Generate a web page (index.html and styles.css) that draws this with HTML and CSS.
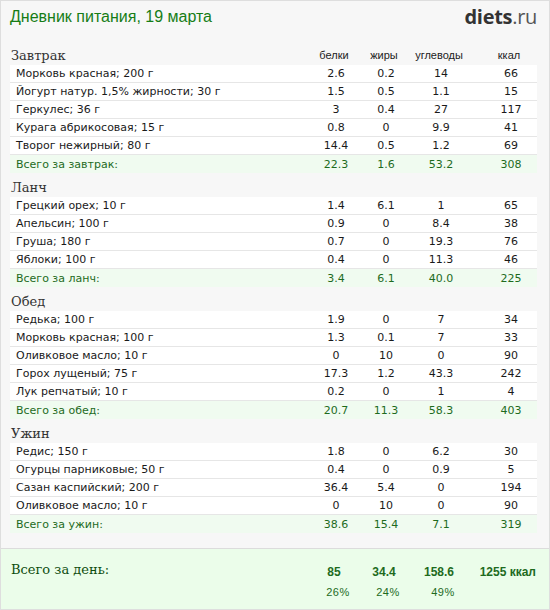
FILE: index.html
```html
<!DOCTYPE html>
<html lang="ru">
<head>
<meta charset="utf-8">
<title>Дневник питания</title>
<link rel="stylesheet" href="styles.css">
</head>
<body>
<div class="page">
  <header class="top">
    <h1 class="title">Дневник питания, 19 марта</h1>
    <div class="logo"><span class="logo-main">diets</span>.ru</div>
  </header>

  <section class="meal">
    <div class="meal-head">
      <h2 class="meal-name">Завтрак</h2>
      <span class="col-h">белки</span><span class="col-h">жиры</span><span class="col-h">углеводы</span><span class="col-h kc">ккал</span>
    </div>
    <div class="row"><span class="name">Морковь красная; 200 г</span><span>2.6</span><span>0.2</span><span>14</span><span class="kc">66</span></div>
    <div class="row"><span class="name">Йогурт натур. 1,5% жирности; 30 г</span><span>1.5</span><span>0.5</span><span>1.1</span><span class="kc">15</span></div>
    <div class="row"><span class="name">Геркулес; 36 г</span><span>3</span><span>0.4</span><span>27</span><span class="kc">117</span></div>
    <div class="row"><span class="name">Курага абрикосовая; 15 г</span><span>0.8</span><span>0</span><span>9.9</span><span class="kc">41</span></div>
    <div class="row"><span class="name">Творог нежирный; 80 г</span><span>14.4</span><span>0.5</span><span>1.2</span><span class="kc">69</span></div>
    <div class="row total"><span class="name">Всего за завтрак:</span><span>22.3</span><span>1.6</span><span>53.2</span><span class="kc">308</span></div>
  </section>

  <section class="meal">
    <div class="meal-head"><h2 class="meal-name">Ланч</h2></div>
    <div class="row"><span class="name">Грецкий орех; 10 г</span><span>1.4</span><span>6.1</span><span>1</span><span class="kc">65</span></div>
    <div class="row"><span class="name">Апельсин; 100 г</span><span>0.9</span><span>0</span><span>8.4</span><span class="kc">38</span></div>
    <div class="row"><span class="name">Груша; 180 г</span><span>0.7</span><span>0</span><span>19.3</span><span class="kc">76</span></div>
    <div class="row"><span class="name">Яблоки; 100 г</span><span>0.4</span><span>0</span><span>11.3</span><span class="kc">46</span></div>
    <div class="row total"><span class="name">Всего за ланч:</span><span>3.4</span><span>6.1</span><span>40.0</span><span class="kc">225</span></div>
  </section>

  <section class="meal">
    <div class="meal-head"><h2 class="meal-name">Обед</h2></div>
    <div class="row"><span class="name">Редька; 100 г</span><span>1.9</span><span>0</span><span>7</span><span class="kc">34</span></div>
    <div class="row"><span class="name">Морковь красная; 100 г</span><span>1.3</span><span>0.1</span><span>7</span><span class="kc">33</span></div>
    <div class="row"><span class="name">Оливковое масло; 10 г</span><span>0</span><span>10</span><span>0</span><span class="kc">90</span></div>
    <div class="row"><span class="name">Горох лущеный; 75 г</span><span>17.3</span><span>1.2</span><span>43.3</span><span class="kc">242</span></div>
    <div class="row"><span class="name">Лук репчатый; 10 г</span><span>0.2</span><span>0</span><span>1</span><span class="kc">4</span></div>
    <div class="row total"><span class="name">Всего за обед:</span><span>20.7</span><span>11.3</span><span>58.3</span><span class="kc">403</span></div>
  </section>

  <section class="meal">
    <div class="meal-head"><h2 class="meal-name">Ужин</h2></div>
    <div class="row"><span class="name">Редис; 150 г</span><span>1.8</span><span>0</span><span>6.2</span><span class="kc">30</span></div>
    <div class="row"><span class="name">Огурцы парниковые; 50 г</span><span>0.4</span><span>0</span><span>0.9</span><span class="kc">5</span></div>
    <div class="row"><span class="name">Сазан каспийский; 200 г</span><span>36.4</span><span>5.4</span><span>0</span><span class="kc">194</span></div>
    <div class="row"><span class="name">Оливковое масло; 10 г</span><span>0</span><span>10</span><span>0</span><span class="kc">90</span></div>
    <div class="row total"><span class="name">Всего за ужин:</span><span>38.6</span><span>15.4</span><span>7.1</span><span class="kc">319</span></div>
  </section>

  <footer class="day">
    <div class="day-grid">
      <div class="day-title">Всего за день:</div>
      <div class="day-cell"><b>85</b><span class="pct">26%</span></div>
      <div class="day-cell"><b>34.4</b><span class="pct">24%</span></div>
      <div class="day-cell"><b>158.6</b><span class="pct">49%</span></div>
      <div class="day-cell kcal"><b>1255 ккал</b></div>
    </div>
  </footer>
</div>
</body>
</html>
```

FILE: styles.css
```css
html, body {
  margin: 0;
  padding: 0;
}

body {
  background: #ffffff;
}

.page {
  box-sizing: border-box;
  width: 550px;
  height: 610px;
  border: 1px solid #dedede;
  background: #f7f7f7;
  display: flex;
  flex-direction: column;
}

.top {
  height: 44px;
  display: flex;
  align-items: flex-start;
  justify-content: space-between;
  padding: 0 12px 0 9px;
}

.title {
  margin: 6px 0 0 0;
  font-family: "Liberation Sans", Arial, sans-serif;
  font-weight: normal;
  font-size: 16px;
  line-height: 20px;
  color: #167d16;
}

.logo {
  margin-top: 3px;
  font-family: "Open Sans", "DejaVu Sans", sans-serif;
  font-size: 20px;
  line-height: 26px;
  color: #555555;
  letter-spacing: -0.3px;
}

.logo-main {
  font-weight: bold;
  color: #333333;
}

.meal {
  padding: 0 12px 0 9px;
  margin-bottom: 4px;
}

.meal-head,
.row,
.day-grid {
  display: grid;
  grid-template-columns: 1fr 50px 50px 60px 66px;
  align-items: center;
}

.meal-head {
  height: 20px;
}

.meal-name {
  margin: 0;
  font-family: "DejaVu Serif", Georgia, serif;
  font-weight: normal;
  font-size: 13px;
  color: #333333;
  padding-left: 1px;
}

.col-h {
  font-family: "Liberation Sans", Arial, sans-serif;
  font-size: 11px;
  color: #222222;
  text-align: center;
  padding-right: 4px;
  white-space: nowrap;
}

.col-h.kc {
  padding-left: 14px;
  padding-right: 4px;
}

.row {
  height: 17px;
  background: #ffffff;
  border-bottom: 1px solid #e6e6e6;
  font-family: "DejaVu Sans", Verdana, sans-serif;
  font-size: 11px;
  color: #1a1a1a;
}

.row span {
  text-align: center;
  white-space: nowrap;
}

.row .name {
  text-align: left;
  padding-left: 6px;
}

.row .kc {
  padding-left: 14px;
}

.row.total {
  background: #f0fbf0;
  border-bottom: none;
  height: 18px;
  color: #1e6b1e;
}

.day {
  margin-top: auto;
  height: 60px;
  border-top: 1px solid #dcdcdc;
  background: #ebfdea;
  padding: 0 12px 0 9px;
}

.day-grid {
  align-items: start;
  padding-top: 12px;
}

.day-title {
  font-family: "DejaVu Serif", Georgia, serif;
  font-size: 13px;
  line-height: 18px;
  color: #0f4d0f;
  padding-left: 1px;
}

.day-cell {
  display: flex;
  flex-direction: column;
  align-items: center;
  font-family: "Liberation Sans", Arial, sans-serif;
  color: #1e6b1e;
  white-space: nowrap;
  margin-top: 2px;
}

.day-cell b {
  font-size: 12px;
  line-height: 18px;
  padding-right: 4px;
}

.day-cell .pct {
  font-size: 11px;
  line-height: 22px;
  letter-spacing: 0.5px;
  padding-left: 4px;
}

.day-cell.kcal {
  align-items: flex-end;
}

.day-cell.kcal b {
  padding-right: 1px;
}
```
